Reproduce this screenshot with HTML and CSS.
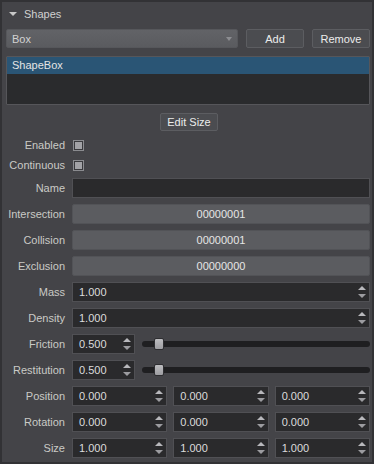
FILE: index.html
```html
<!DOCTYPE html>
<html lang="en">
<head>
  <meta charset="UTF-8" />
  <title>Shapes</title>
  <link rel="stylesheet" href="styles.css">
</head>
<body>
  <div class="panel">
    <div class="header">
      <span class="caret"></span>
      <span>Shapes</span>
    </div>

    <div class="toolbar">
      <div class="combo">
        <span>Box</span>
        <span class="combo-arrow"></span>
      </div>
      <button class="btn">Add</button>
      <button class="btn">Remove</button>
    </div>

    <div class="list">
      <div class="list-item selected">ShapeBox</div>
    </div>

    <div class="center">
      <button class="btn">Edit Size</button>
    </div>

    <div class="form">
      <label>Enabled</label>
      <div class="check-row"><span class="check"></span></div>

      <label>Continuous</label>
      <div class="check-row"><span class="check"></span></div>

      <label>Name</label>
      <div class="input"></div>

      <label>Intersection</label>
      <div class="mask">00000001</div>

      <label>Collision</label>
      <div class="mask">00000001</div>

      <label>Exclusion</label>
      <div class="mask">00000000</div>

      <label>Mass</label>
      <div class="input spin"><span class="val">1.000</span><span class="arrows"></span></div>

      <label>Density</label>
      <div class="input spin"><span class="val">1.000</span><span class="arrows"></span></div>

      <label>Friction</label>
      <div class="slider-row">
        <div class="input spin short"><span class="val">0.500</span><span class="arrows"></span></div>
        <div class="slider"><span class="handle"></span></div>
      </div>

      <label>Restitution</label>
      <div class="slider-row">
        <div class="input spin short"><span class="val">0.500</span><span class="arrows"></span></div>
        <div class="slider"><span class="handle"></span></div>
      </div>

      <label>Position</label>
      <div class="triple">
        <div class="input spin"><span class="val">0.000</span><span class="arrows"></span></div>
        <div class="input spin"><span class="val">0.000</span><span class="arrows"></span></div>
        <div class="input spin"><span class="val">0.000</span><span class="arrows"></span></div>
      </div>

      <label>Rotation</label>
      <div class="triple">
        <div class="input spin"><span class="val">0.000</span><span class="arrows"></span></div>
        <div class="input spin"><span class="val">0.000</span><span class="arrows"></span></div>
        <div class="input spin"><span class="val">0.000</span><span class="arrows"></span></div>
      </div>

      <label>Size</label>
      <div class="triple">
        <div class="input spin"><span class="val">1.000</span><span class="arrows"></span></div>
        <div class="input spin"><span class="val">1.000</span><span class="arrows"></span></div>
        <div class="input spin"><span class="val">1.000</span><span class="arrows"></span></div>
      </div>
    </div>
  </div>
</body>
</html>
```

FILE: styles.css
```css
:root {
  --frame: #323235;
  --bg: #444448;
  --text: #cacac6;
  --field: #2a2a2c;
  --field-border: #505054;
  --button: #4b4c50;
  --button-border: #5c5d61;
  --mask: #5b5c60;
  --select: #2a5575;
}
* {
  box-sizing: border-box;
  font-family: "Liberation Sans", Arial, sans-serif;
  font-size: 11px;
}
body {
  margin: 0;
  background: var(--bg);
  color: var(--text);
}
.panel {
  width: 374px;
  height: 464px;
  border: 2px solid var(--frame);
  background: var(--bg);
  padding: 0 2px 0 4px;
}
.header {
  height: 24px;
  display: flex;
  align-items: center;
  gap: 7px;
  padding-left: 3px;
  color: #d0d0d0;
}
.caret {
  width: 0;
  height: 0;
  border-left: 4px solid transparent;
  border-right: 4px solid transparent;
  border-top: 4px solid #c8c8c8;
}
.toolbar {
  margin-top: 3px;
  display: flex;
  gap: 8px;
  height: 19px;
}
.combo {
  flex: 1;
  display: flex;
  align-items: center;
  justify-content: space-between;
  padding: 0 5px 0 5px;
  background: linear-gradient(#626367, #5a5b5f);
  border: 1px solid #56575b;
  border-radius: 2px;
  color: #d2d2d2;
}
.combo-arrow {
  width: 0;
  height: 0;
  border-left: 3px solid transparent;
  border-right: 3px solid transparent;
  border-top: 4px solid #8c8d91;
}
.btn {
  height: 19px;
  width: 58px;
  padding: 0;
  background: var(--button);
  border: 1px solid var(--button-border);
  border-radius: 2px;
  color: #ececec;
}
.list {
  margin-top: 8px;
  height: 49px;
  background: #2a2b2d;
  border: 1px solid #56565a;
  border-radius: 1px;
}
.list-item {
  height: 17px;
  line-height: 17px;
  padding-left: 5px;
  color: #e4e4e4;
}
.list-item.selected {
  background: var(--select);
}
.center {
  margin-top: 8px;
  display: flex;
  justify-content: center;
  padding-left: 2px;
}
.center .btn {
  height: 18px;
}
.form {
  margin-top: 7px;
  display: grid;
  grid-template-columns: 57px 1fr;
  column-gap: 7px;
  row-gap: 6px;
  padding-left: 2px;
}
.form label {
  display: flex;
  align-items: center;
  justify-content: flex-end;
  white-space: nowrap;
  color: var(--text);
}
.check-row {
  height: 14px;
  display: flex;
  align-items: center;
}
.check {
  width: 11px;
  height: 11px;
  margin-left: 1px;
  border: 1px solid #8a8b8f;
  background: #a2a2a6;
  box-shadow: inset 0 0 0 1px #3a3a3d;
}
.input {
  height: 20px;
  background: var(--field);
  border: 1px solid var(--field-border);
  display: flex;
  align-items: center;
  color: #dcdcdc;
}
.val {
  flex: 1;
  padding-left: 6px;
}
.arrows {
  width: 8px;
  height: 12px;
  margin-right: 3px;
  display: flex;
  flex-direction: column;
  justify-content: space-between;
  align-items: center;
}
.arrows::before,
.arrows::after {
  content: "";
  width: 0;
  height: 0;
  border-left: 4px solid transparent;
  border-right: 4px solid transparent;
}
.arrows::before {
  border-bottom: 4px solid #b8b8bc;
}
.arrows::after {
  border-top: 4px solid #9c9ca0;
}
.mask {
  height: 20px;
  background: var(--mask);
  border: 1px solid #525357;
  border-radius: 2px;
  display: flex;
  align-items: center;
  justify-content: center;
  color: #e6e6e6;
}
.slider-row {
  display: flex;
  align-items: center;
}
.short {
  width: 63px;
}
.slider {
  position: relative;
  flex: 1;
  height: 6px;
  margin-left: 7px;
  background: #1f1f21;
  border-radius: 3px;
}
.handle {
  position: absolute;
  left: 12px;
  top: -3px;
  width: 10px;
  height: 12px;
  background: linear-gradient(#bdbdc0, #9d9da1);
  border: 1px solid #2e2e31;
  border-radius: 2px;
}
.triple {
  display: grid;
  grid-template-columns: 1fr 1fr 1fr;
  gap: 6px;
}
```
